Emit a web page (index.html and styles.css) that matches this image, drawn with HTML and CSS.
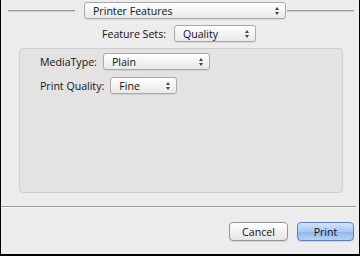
FILE: index.html
```html
<!DOCTYPE html>
<html>
<head>
<meta charset="utf-8">
<link rel="stylesheet" href="styles.css">
</head>
<body>
<div class="frame">
  <div class="top-row">
    <div class="rule"></div>
    <div class="popup popup-main"><span>Printer Features</span><span class="arrows"><i class="up"></i><i class="down"></i></span></div>
    <div class="rule"></div>
  </div>
  <div class="set-row">
    <span class="label">Feature Sets:</span>
    <div class="popup popup-set"><span>Quality</span><span class="arrows"><i class="up"></i><i class="down"></i></span></div>
  </div>
  <div class="panel">
    <div class="field">
      <span class="label">MediaType:</span>
      <div class="popup popup-media"><span>Plain</span><span class="arrows"><i class="up"></i><i class="down"></i></span></div>
    </div>
    <div class="field">
      <span class="label">Print Quality:</span>
      <div class="popup popup-quality"><span>Fine</span><span class="arrows"><i class="up"></i><i class="down"></i></span></div>
    </div>
  </div>
  <div class="separator"></div>
  <div class="buttons">
    <div class="btn">Cancel</div>
    <div class="btn btn-default">Print</div>
  </div>
</div>
</body>
</html>
```
FILE: styles.css
```css
html, body {
  margin: 0;
  padding: 0;
  background: #000;
}
.frame {
  box-sizing: border-box;
  width: 358px;
  height: 254px;
  margin-left: 1px;
  background: #ececec;
  font-family: "Open Sans", "DejaVu Sans", sans-serif;
  font-size: 10.6px;
  color: #111;
  display: flex;
  flex-direction: column;
}
.top-row {
  display: flex;
  align-items: center;
  padding: 2px 5px 0 7px;
  height: 17px;
}
.rule {
  flex: 1;
  height: 1px;
  background: #9c9c9c;
  border-bottom: 1px solid #d0d0d0;
}
.popup {
  box-sizing: border-box;
  height: 17px;
  border: 1px solid #a9a9a9;
  border-radius: 3px;
  background: linear-gradient(#ffffff, #f3f3f3 50%, #e9e9e9);
  display: flex;
  align-items: center;
  justify-content: space-between;
  padding: 0 6px 0 8px;
  box-shadow: 0 1px 0 rgba(0,0,0,0.08);
}
.popup-main { width: 202px; margin: 0 1px 0 9px; }
.set-row {
  display: flex;
  align-items: center;
  justify-content: center;
  gap: 8px;
  margin-top: 6px;
  padding-right: 2px;
}
.popup-set { width: 82px; }
.arrows {
  display: flex;
  flex-direction: column;
  gap: 2px;
}
.arrows i {
  display: block;
  width: 0;
  height: 0;
  border-left: 2.5px solid transparent;
  border-right: 2.5px solid transparent;
}
.arrows .up { border-bottom: 3px solid #444; }
.arrows .down { border-top: 3px solid #444; }
.panel {
  box-sizing: border-box;
  margin: 6px 16px 0 18px;
  height: 145px;
  background: #e3e3e3;
  border: 1px solid #cdcdcd;
  border-radius: 4px;
  padding: 4px 0 0 20px;
  display: flex;
  flex-direction: column;
  gap: 7px;
}
.field {
  display: flex;
  align-items: center;
  gap: 6px;
}
.popup-media { width: 107px; }
.popup-quality { width: 67px; }
.separator {
  margin-top: 13px;
  height: 1px;
  background: #9a9a9a;
  border-bottom: 1px solid #f6f6f6;
  margin-right: 3px;
}
.buttons {
  display: flex;
  justify-content: flex-end;
  gap: 9px;
  padding: 14px 5px 0 0;
}
.btn {
  box-sizing: border-box;
  height: 19px;
  width: 59px;
  border: 1px solid #959595;
  border-radius: 4px;
  background: linear-gradient(#ffffff, #f1f1f1 50%, #e4e4e4);
  display: flex;
  align-items: center;
  justify-content: center;
  box-shadow: 0 1px 0 rgba(0,0,0,0.1);
}
.btn-default {
  width: 57px;
  border-color: #5a7fb8;
  background: linear-gradient(#d3e3f8, #a9c8f0 50%, #8eb6ea 51%, #b6d2f5);
}
```
